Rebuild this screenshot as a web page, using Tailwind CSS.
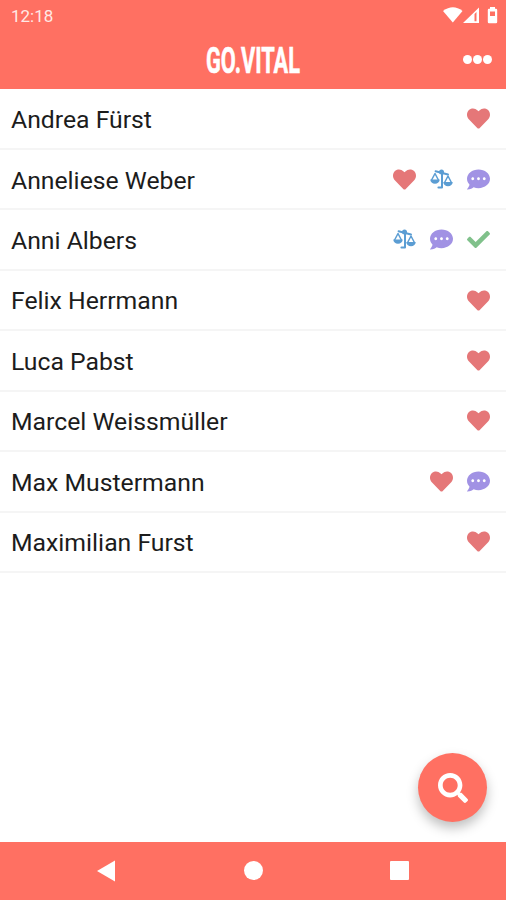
<!DOCTYPE html>
<html lang="de">
<head>
<meta charset="utf-8">
<title>GO.VITAL</title>
<script src="https://cdn.jsdelivr.net/npm/@tailwindcss/browser@4"></script>
</head>
<body class="bg-white font-[Roboto,sans-serif]">
<svg class="hidden">
  <symbol id="heart" viewBox="0 0 512 512"><path fill="#e57778" d="M462.3 62.6C407.5 15.9 326 24.3 275.7 76.2L256 96.5l-19.7-20.3C186.1 24.3 104.5 15.9 49.7 62.6c-62.8 53.6-66.1 149.8-9.9 207.9l193.5 199.8c12.5 12.9 32.8 12.9 45.3 0l193.5-199.8c56.3-58.1 53-154.3-9.8-207.9z"/></symbol>
  <symbol id="chat" viewBox="0 0 512 512"><path fill="#a192e4" d="M256 32C114.6 32 0 125.1 0 240c0 49.6 21.4 95 57 130.7C44.5 421.1 2.7 466 2.2 466.5c-2.2 2.3-2.8 5.7-1.5 8.7S4.8 480 8 480c66.3 0 116-31.8 140.600-51.400 32.700 12.300 69 19.400 107.400 19.400 141.400 0 256-93.100 256-208S397.400 32 256 32zM128 272c-17.700 0-32-14.300-32-32s14.300-32 32-32 32 14.300 32 32-14.300 32-32 32zm128 0c-17.700 0-32-14.300-32-32s14.300-32 32-32 32 14.300 32 32-14.300 32-32 32zm128 0c-17.700 0-32-14.300-32-32s14.300-32 32-32 32 14.300 32 32-14.300 32-32 32z"/></symbol>
  <symbol id="check" viewBox="0 0 512 512"><path fill="#80c18b" d="M173.898 439.404l-166.400-166.400c-9.997-9.997-9.997-26.206 0-36.204l36.203-36.204c9.997-9.998 26.207-9.998 36.204 0L192 312.690 432.095 72.596c9.997-9.997 26.207-9.997 36.204 0l36.203 36.204c9.997 9.997 9.997 26.206 0 36.204l-294.400 294.401c-9.998 9.997-26.207 9.997-36.204-.001z"/></symbol>
  <symbol id="scale" viewBox="0 0 23 23"><g fill="none" stroke="#5b9dd3" stroke-width="2" stroke-linecap="round" stroke-linejoin="round"><path d="M5.600 3.300l12.400 3.200M12 5v14.600H8.400"/><path stroke-width="1.500" d="M1.600 12L5 5.500 8.400 12M14.600 14.500L18 8l3.400 6.500"/></g><g fill="#5b9dd3"><circle cx="11.500" cy="4" r="2.500"/><path d="M.3 11.500h9.400c0 2.700-2.100 4.200-4.700 4.200S.3 14.200.3 11.500zM13.300 14h9.400c0 2.700-2.100 4.200-4.700 4.200s-4.700-1.500-4.700-4.200z"/></g></symbol>
</svg>
<div class="flex h-[900px] w-[506px] flex-col overflow-hidden">
  <header class="h-[88.500px] shrink-0 bg-[#ff7062] text-white">
    <div class="flex h-8 items-center justify-between pr-[8px] pl-[11px]">
      <span class="text-[17px] leading-8 text-[#ffe9e5]">12:18</span>
      <svg class="h-8 w-[56px]" viewBox="442 0 56 32" fill="#fff"><path d="M443 11q10-7.500 19.500 0L452.800 22.500z"/><path fill-rule="evenodd" d="M463 23L479 7.500V23zM474.500 14v7.200h2V12z"/><path fill-rule="evenodd" d="M490 7h5v1.800h1q1.200 0 1.200 1.200v12q0 1.200-1.200 1.200h-7q-1.200 0-1.200-1.200V10q0-1.200 1.200-1.200h1zM490 11.500v4.500h5v-4.500z"/></svg>
    </div>
    <div class="flex h-[55px] items-center justify-between pr-[14px] pl-[203px]">
      <svg class="h-14 w-[104px] overflow-visible" viewBox="0 0 104 56"><text x="3" y="41" font-family="Roboto, sans-serif" font-size="36" font-weight="700" fill="#fff" stroke="#fff" stroke-width=".6" textLength="94" lengthAdjust="spacingAndGlyphs">GO.VITAL</text></svg>
      <div class="flex gap-[1px]"><i class="size-[9px] rounded-full bg-white"></i><i class="size-[9px] rounded-full bg-white"></i><i class="size-[9px] rounded-full bg-white"></i></div>
    </div>
  </header>
  <main class="flex-1 pt-[1px] text-[24.750px] text-[#1c1c1c] [&>div]:flex [&>div]:h-[60.450px] [&>div]:items-center [&>div]:gap-[14px] [&>div]:border-b-2 [&>div]:border-[#f5f5f5] [&>div]:pr-[16px] [&>div]:pl-[11px] [&_span]:flex-1 [&_span]:pt-[2px] [&_svg]:size-[23px]">
    <div><span>Andrea Fürst</span><svg><use href="#heart"/></svg></div>
    <div><span>Anneliese Weber</span><svg><use href="#heart"/></svg><svg><use href="#scale"/></svg><svg><use href="#chat"/></svg></div>
    <div><span>Anni Albers</span><svg><use href="#scale"/></svg><svg><use href="#chat"/></svg><svg><use href="#check"/></svg></div>
    <div><span>Felix Herrmann</span><svg><use href="#heart"/></svg></div>
    <div><span>Luca Pabst</span><svg><use href="#heart"/></svg></div>
    <div><span>Marcel Weissmüller</span><svg><use href="#heart"/></svg></div>
    <div><span>Max Mustermann</span><svg><use href="#heart"/></svg><svg><use href="#chat"/></svg></div>
    <div><span>Maximilian Furst</span><svg><use href="#heart"/></svg></div>
  </main>
  <button class="absolute top-[753px] left-[418px] flex size-[69px] items-center justify-center rounded-full bg-[#ff7062] shadow-[0_6px_12px_rgba(0,0,0,0.25)]" aria-label="Suche">
    <svg class="size-[30px]" viewBox="0 0 512 512" fill="#fff"><path d="M505 442.700L405.300 343c-4.500-4.500-10.600-7-17-7H372c27.600-35.300 44-79.700 44-128C416 93.100 322.900 0 208 0S0 93.100 0 208s93.100 208 208 208c48.300 0 92.700-16.400 128-44v16.300c0 6.400 2.500 12.500 7 17l99.700 99.700c9.400 9.400 24.600 9.400 33.900 0l28.300-28.300c9.400-9.400 9.400-24.600.1-34zM208 336c-70.700 0-128-57.200-128-128s57.200-128 128-128 128 57.200 128 128-57.200 128-128 128z"/></svg>
  </button>
  <nav class="relative flex h-[58.500px] shrink-0 items-center justify-between bg-[#ff7062] pr-[97px] pl-[97px]">
    <svg class="h-[22px] w-[19px]" viewBox="0 0 19 22"><path d="M0 11L18 .5v21z" fill="#fff"/></svg>
    <i class="size-[19px] rounded-full bg-white"></i>
    <i class="size-[19px] rounded-[1px] bg-white"></i>
  </nav>
</div>
</body>
</html>
